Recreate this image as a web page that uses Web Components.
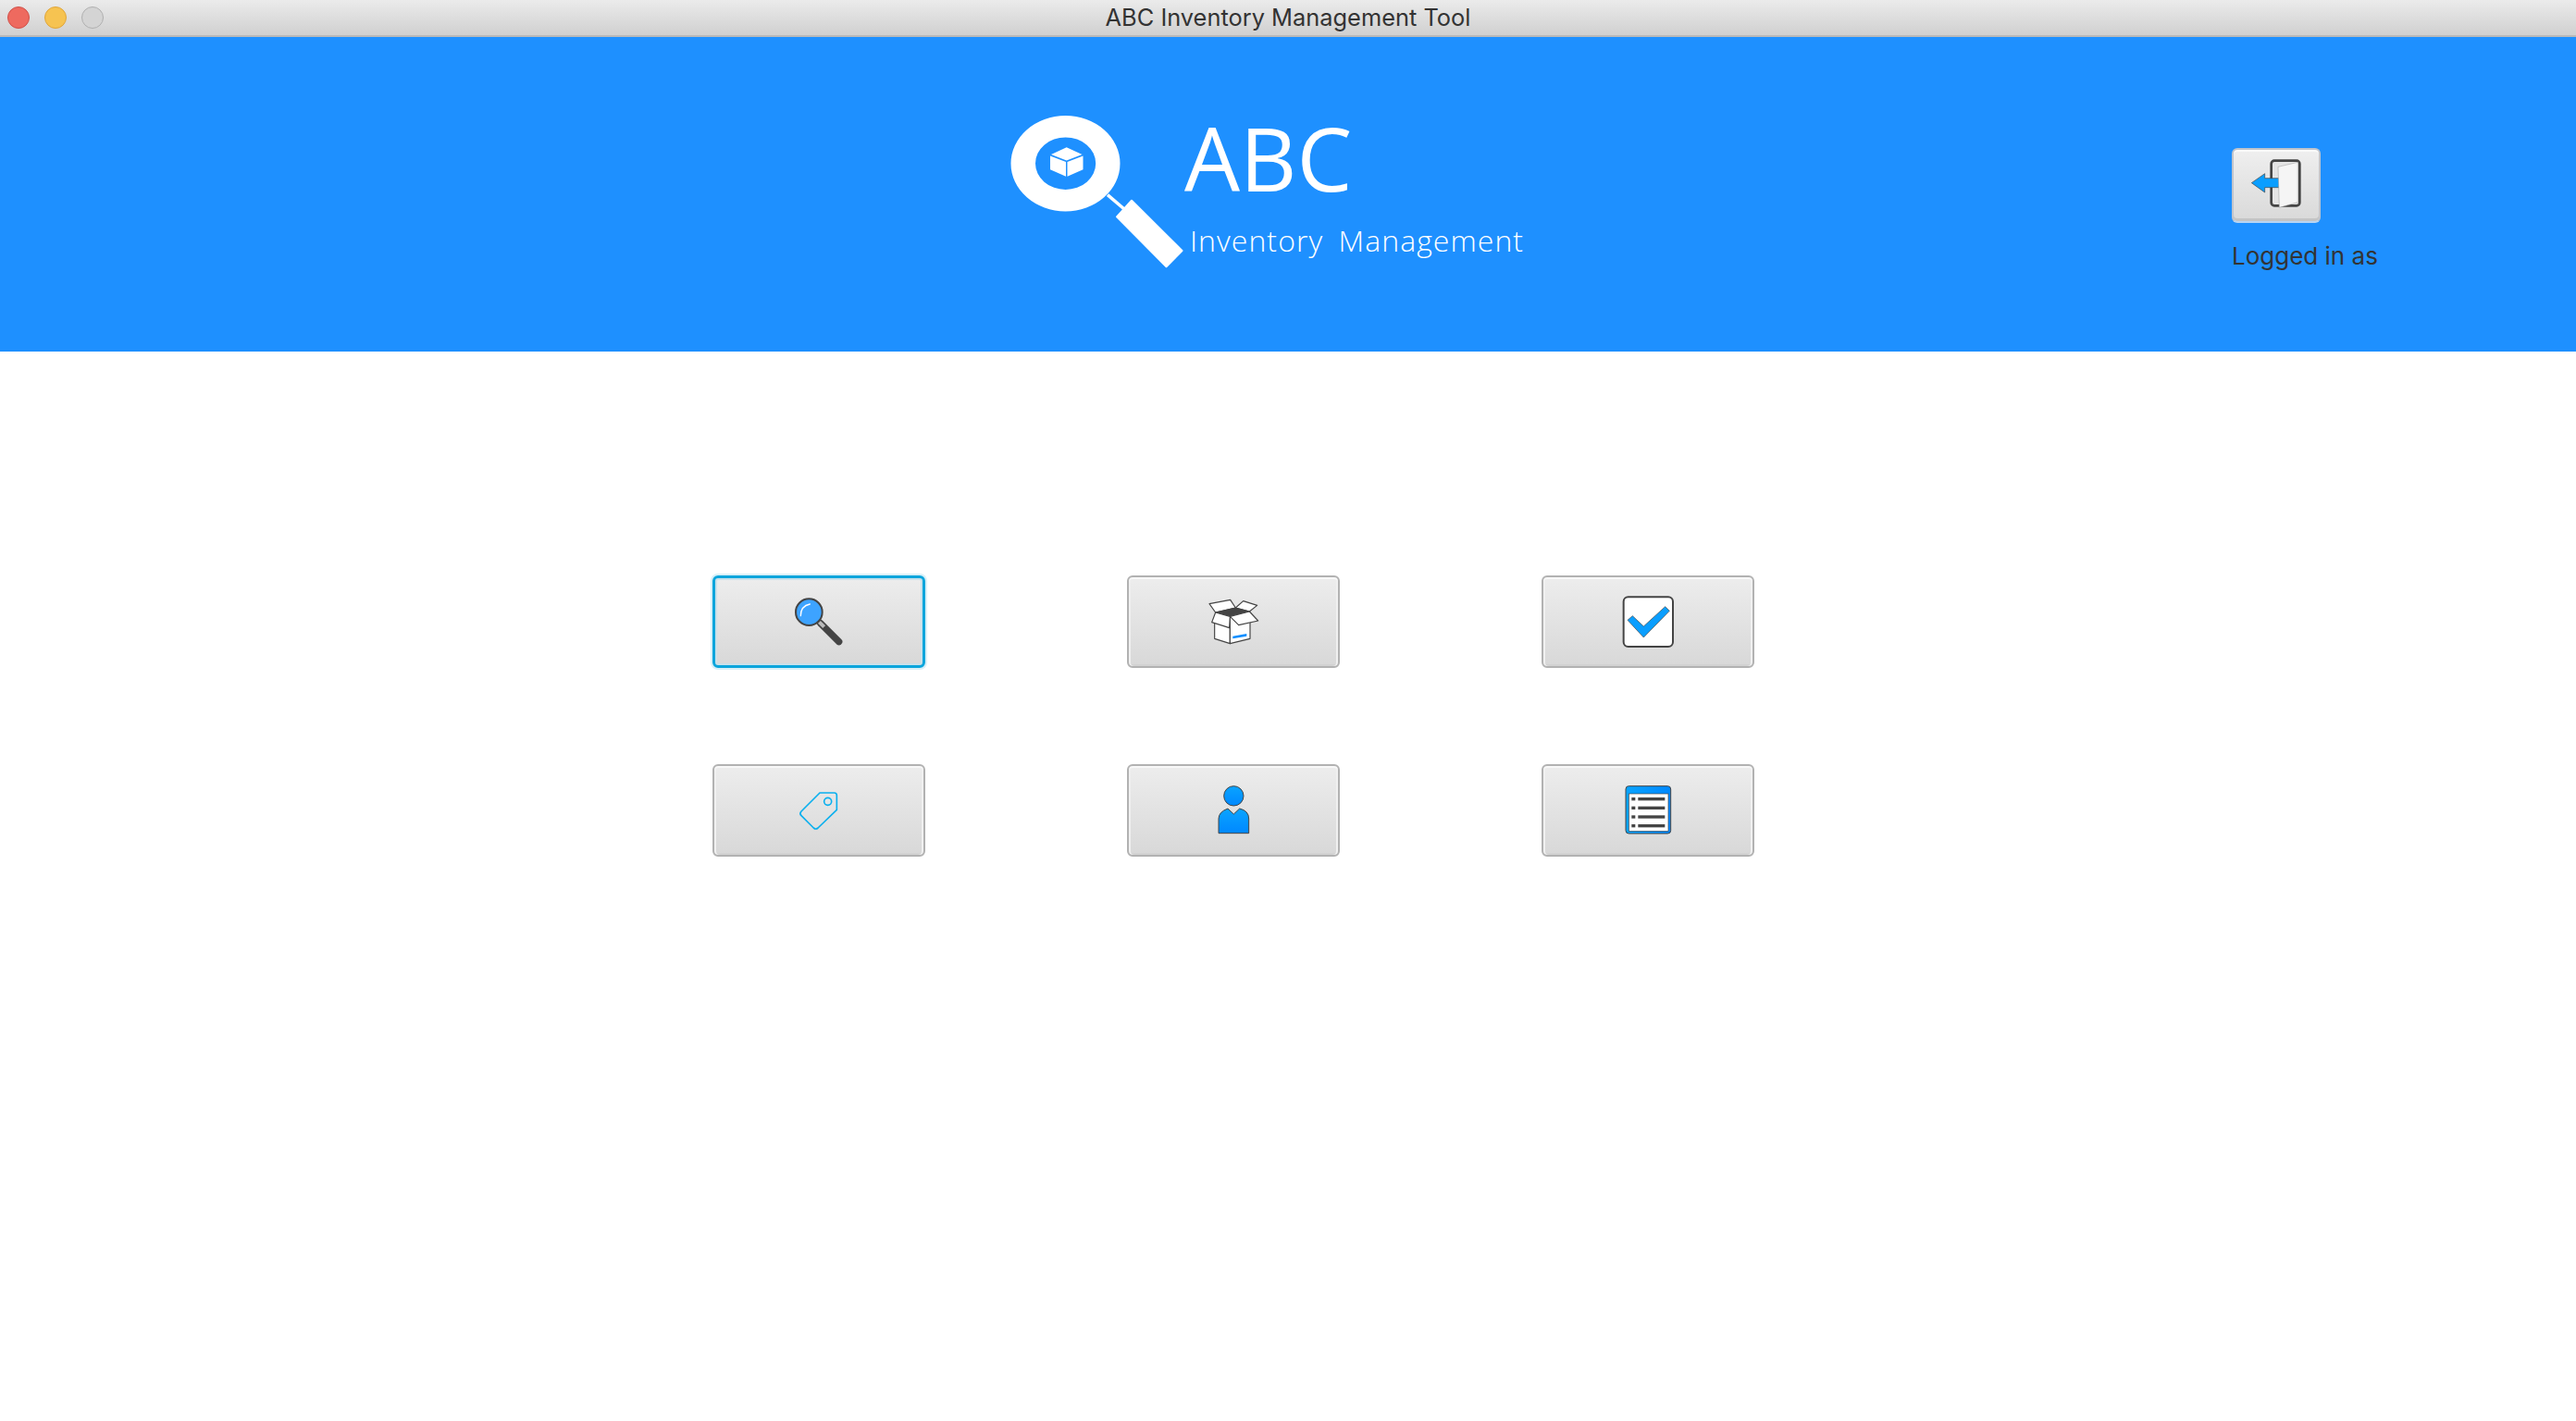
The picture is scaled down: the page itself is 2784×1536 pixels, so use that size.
<!DOCTYPE html>
<html lang="en">
<head>
<meta charset="utf-8">
<title>ABC Inventory Management Tool</title>
<style>
    html, body { margin: 0; background: #fff; }
    body { width: 2784px; height: 1536px; overflow: hidden; font-family: Inter, "Liberation Sans", sans-serif; }
</style>
</head>
<body>
<window-titlebar>ABC Inventory Management Tool</window-titlebar>
<app-header></app-header>
<main-menu>
    <tool-button focused title="Search">
        <svg width="80" height="80" viewBox="255 65 240 240">
            <path d="M380 190 L440 250" stroke="#444" stroke-width="22" stroke-linecap="round" fill="none"/>
            <path d="M376 186 L392 202" stroke="#bbb" stroke-width="12" fill="none"/>
            <circle cx="343" cy="154" r="43" fill="#3da3ff" stroke="#444" stroke-width="6"/>
            <path d="M316 166 Q316 134 346 128" stroke="#fff" stroke-width="4" stroke-linecap="round" fill="none"/>
        </svg>
    </tool-button>
    <tool-button title="Stock">
        <svg width="80" height="80" viewBox="248 65 240 240" stroke="#444" stroke-width="3.5" stroke-linejoin="round">
            <path d="M290 127 L358 114 L375 140 L310 155 Z" fill="#fff"/>
            <path d="M400 118 L445 132 L420 152 L375 140 Z" fill="#fff"/>
            <path d="M310 155 L375 140 L420 152 L357 168 Z" fill="#444"/>
            <path d="M307 185 L357 205 L357 256 L307 240 Z" fill="#fff"/>
            <path d="M357 168 L422 185 L422 240 L357 256 Z" fill="#fff"/>
            <path d="M310 155 L357 168 L355 205 L298 187 Z" fill="#fff"/>
            <path d="M357 168 L420 152 L448 182 L385 196 Z" fill="#fff"/>
            <path d="M366 232 L411 224 L411 232 L366 240 Z" fill="#0a8dff" stroke="none"/>
        </svg>
    </tool-button>
    <tool-button title="Check">
        <svg width="80" height="80" viewBox="242 65 240 240">
            <rect x="283" y="105" width="160" height="161" rx="15" fill="#fff" stroke="#444" stroke-width="6"/>
            <path d="M296 180 L312 166 L348 200 L418 136 L432 150 L348 236 Z" fill="#0a9eff" stroke="#444" stroke-width="2" stroke-linejoin="round"/>
        </svg>
    </tool-button>
    <tool-button title="Tags">
        <svg width="80" height="80" viewBox="255 65 240 240" fill="none" stroke="#0bb0ee" stroke-width="5">
            <path d="M378 128 H425 Q433 128 433 136 V183 L372 242 Q365 248 358 242 L318 202 Q311 195 318 188 Z"/>
            <circle cx="404" cy="156" r="12"/>
        </svg>
    </tool-button>
    <tool-button title="Users">
        <svg width="80" height="80" viewBox="248 65 240 240" stroke="#444" stroke-width="3">
            <defs>
                <linearGradient id="personFill" x1="0" y1="0" x2="0" y2="1">
                    <stop offset="0" stop-color="#0aa4ff"/>
                    <stop offset="1" stop-color="#0088ff"/>
                </linearGradient>
            </defs>
            <circle cx="369" cy="138" r="32" fill="url(#personFill)"/>
            <path d="M320 259 V212 Q320 190 350 179 L369 197 L388 179 Q418 186 418 212 V259 Z" fill="url(#personFill)" stroke-linejoin="round"/>
        </svg>
    </tool-button>
    <tool-button title="Reports">
        <svg width="80" height="80" viewBox="242 65 240 240">
            <defs>
                <linearGradient id="listFill" x1="0" y1="0" x2="1" y2="0">
                    <stop offset="0" stop-color="#0aa4ff"/>
                    <stop offset="1" stop-color="#0088ff"/>
                </linearGradient>
            </defs>
            <rect x="290" y="106" width="146" height="154" rx="10" fill="url(#listFill)" stroke="#444" stroke-width="3"/>
            <rect x="300" y="131" width="128" height="121" fill="#fff" stroke="#444" stroke-width="2"/>
            <g fill="#444">
                <rect x="309" y="143" width="12" height="10"/><rect x="330" y="143" width="87" height="10"/>
                <rect x="309" y="172" width="12" height="10"/><rect x="330" y="172" width="87" height="10"/>
                <rect x="309" y="201" width="12" height="10"/><rect x="330" y="201" width="87" height="10"/>
                <rect x="309" y="230" width="12" height="10"/><rect x="330" y="230" width="87" height="10"/>
            </g>
        </svg>
    </tool-button>
</main-menu>

<script>
// Mac style title bar with the three window dots
class WindowTitlebar extends HTMLElement {
    constructor() {
        super();
        this.attachShadow({ mode: 'open' });
    }

    connectedCallback() {
        this.shadowRoot.innerHTML = `
            <style>
                :host {
                    display: grid; grid-template-columns: 1fr auto 1fr; align-items: center;
                    height: 38px; background: linear-gradient(#ebebeb, #d0d0d0); border-bottom: 2px solid #b9b9b9;
                    font: 25.4px Inter, "Liberation Sans", sans-serif; color: #333;
                }
                .title { margin-bottom: 2px; }
                .dots { display: flex; gap: 16px; margin-left: 8px; }
                .dot { width: 22px; height: 22px; border-radius: 50%; border: 1px solid; }
                .close { background: #ee6a5f; border-color: #d0514a; }
                .min { background: #f6c351; border-color: #e0a63a; }
                .max { background: #d4d4d4; border-color: #b0b0b0; }
            </style>
            <div class="dots">
                <div class="dot close"></div>
                <div class="dot min"></div>
                <div class="dot max"></div>
            </div>
            <div class="title"><slot></slot></div>
            <div></div>
        `;
    }
}
customElements.define('window-titlebar', WindowTitlebar);

// Blue banner: logo, product name, logout
class AppHeader extends HTMLElement {
    constructor() {
        super();
        this.attachShadow({ mode: 'open' });
    }

    connectedCallback() {
        this.shadowRoot.innerHTML = `
            <style>
                :host {
                    display: flex; height: 340px; background: #1e90ff; color: #fff;
                    padding-left: 1086px; box-sizing: border-box;
                }
                .logo { display: block; margin-top: 80px; }
                .brand { font-family: "Open Sans", "Liberation Sans", sans-serif; font-weight: 400; margin-left: -1px; }
                .name { font-size: 95px; line-height: 95px; margin-top: 83px; }
                .sub { font-size: 32px; line-height: 40px; margin-top: 22px; margin-left: 6px; word-spacing: 7px; font-weight: 300; letter-spacing: 1.05px; white-space: nowrap; }
                .user {
                    position: absolute; left: 2412px; top: 160px;
                    font: 26px Inter, "Liberation Sans", sans-serif; color: #333;
                }
                .user .label { margin-top: 19px; white-space: nowrap; line-height: 34px; }
                button {
                    display: flex; align-items: center; justify-content: center;
                    width: 96px; height: 81px; padding: 0; box-sizing: border-box;
                    border: 2px solid #c0c4cc; border-bottom-color: #b9d4f2; border-radius: 6px;
                    background: linear-gradient(#efefef, #d9d9d9);
                    box-shadow: inset 0 2px 0 #fafafa, inset 0 -3px 0 #c4c4c4;
                }
            </style>
            <svg class="logo" width="195" height="175" viewBox="1085 120 195 175">
                <path fill="#fff" fill-rule="evenodd" d="M1091.5 176.7 a59 51.7 0 1 0 118 0 a59 51.7 0 1 0 -118 0 Z M1118 176.7 a32.6 28.3 0 1 1 65.2 0 a32.6 28.3 0 1 1 -65.2 0 Z"/>
                <path d="M1196 210.7 L1214 226" stroke="#fff" stroke-width="3.5"/>
                <path fill="#fff" stroke="#fff" stroke-width="2" stroke-linejoin="round" d="M1222 216.7 L1276.5 271 L1259.5 288.3 L1206 234.3 Z"/>
                <g fill="#fff">
                    <path d="M1151.7 159.3 L1168.5 167 L1151.7 173.5 L1135 167 Z"/>
                    <path d="M1134 168.5 L1151 175 L1151 190.7 L1134 183.3 Z"/>
                    <path d="M1169.5 168.5 L1152.5 175 L1152.5 190.7 L1169.5 183.3 Z"/>
                </g>
            </svg>
            <div class="brand">
                <div class="name">ABC</div>
                <div class="sub">Inventory Management</div>
            </div>
            <div class="user">
                <button title="Log out">
                    <svg width="80" height="68" viewBox="120 80 240 204">
                        <rect x="224" y="100" width="92" height="146" rx="10" fill="#e4e4e4" stroke="#444" stroke-width="8"/>
                        <path d="M160 172 L203 142 V157 H250 V187 H203 V203 Z" fill="#0a9eff" stroke="#444" stroke-width="2" stroke-linejoin="round"/>
                        <path d="M246 120 L310 105 V235 L250 252 Z" fill="#f5f5f5" stroke="#999" stroke-width="1.5"/>
                    </svg>
                </button>
                <div class="label">Logged in as</div>
            </div>
        `;
    }
}
customElements.define('app-header', AppHeader);

// 3 x 2 grid of the tool buttons
class MainMenu extends HTMLElement {
    constructor() {
        super();
        this.attachShadow({ mode: 'open' });
    }

    connectedCallback() {
        this.shadowRoot.innerHTML = `
            <style>
                :host {
                    display: grid; grid-template-columns: repeat(3, 230px); grid-auto-rows: 100px;
                    column-gap: 218px; row-gap: 104px; padding: 242px 0 0 770px;
                }
            </style>
            <slot></slot>
        `;
    }
}
customElements.define('main-menu', MainMenu);

class ToolButton extends HTMLElement {
    constructor() {
        super();
        this.attachShadow({ mode: 'open' });
    }

    connectedCallback() {
        this.shadowRoot.innerHTML = `
            <style>
                :host { display: block; }
                button {
                    display: flex; align-items: center; justify-content: center;
                    width: 100%; height: 100%; padding: 0; box-sizing: border-box;
                    border: 2px solid #b2b2b2; border-radius: 6px;
                    background: linear-gradient(#ededed, #d8d8d8);
                    box-shadow: inset 0 2px 0 #f8f8f8, inset 2px 0 0 #f0f0f0, inset -2px 0 0 #f0f0f0, inset 0 -2px 0 #d2d2d2;
                }
                :host([focused]) button {
                    border: 3px solid #0aa5dc;
                    box-shadow: 0 0 0 2px #d8f0f8, inset 0 0 0 2px #c8e0ea;
                }
            </style>
            <button><slot></slot></button>
        `;
    }
}
customElements.define('tool-button', ToolButton);
</script>
</body>
</html>
